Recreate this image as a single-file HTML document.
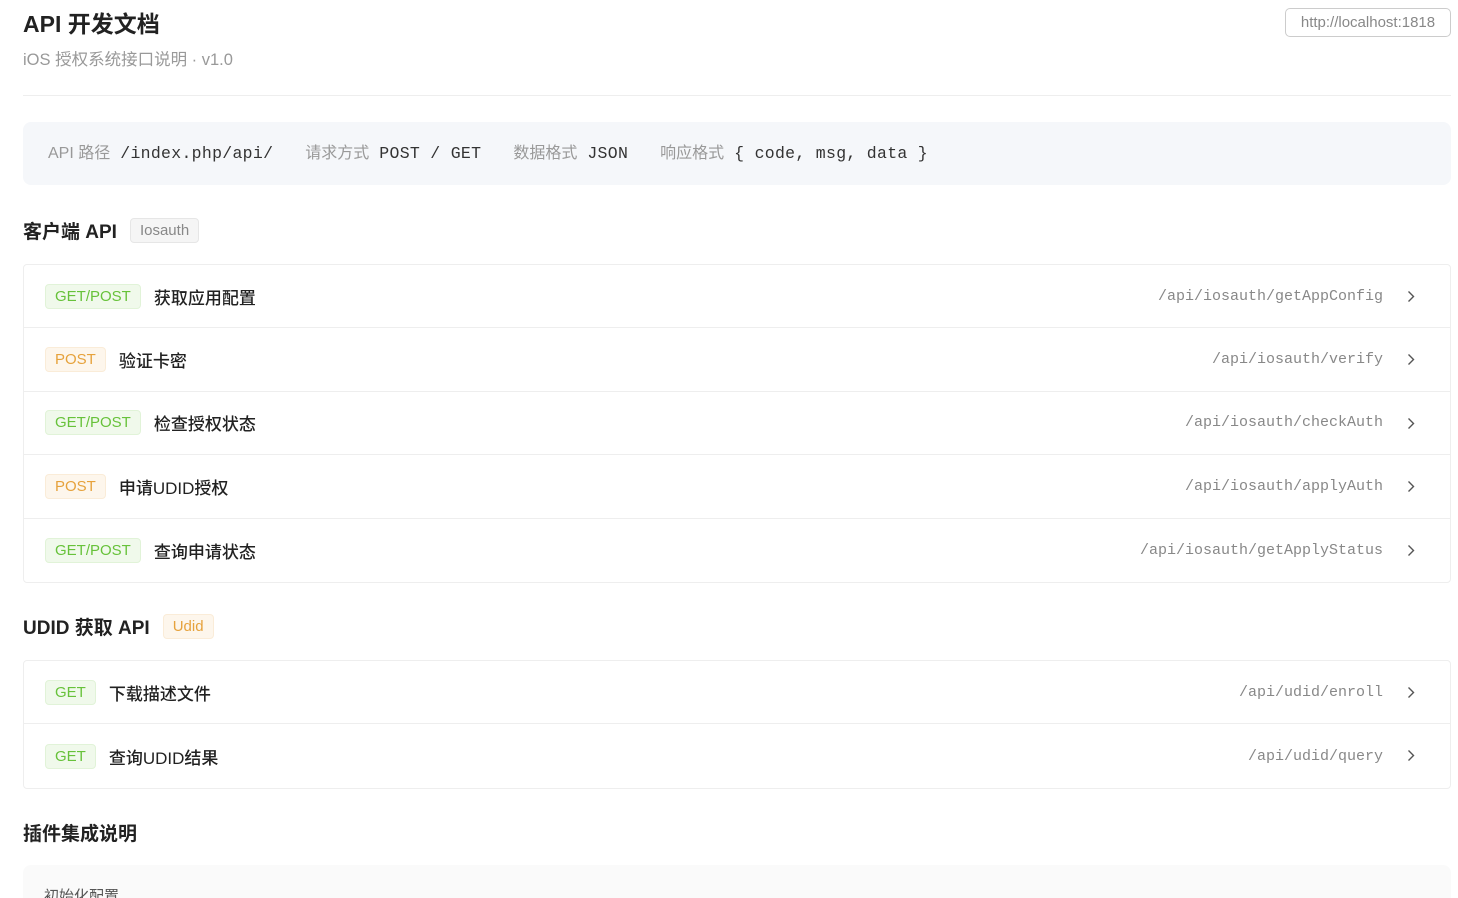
<!DOCTYPE html>
<html><head><meta charset="utf-8"><style>
*{margin:0;padding:0;box-sizing:border-box}
html,body{width:1458px;height:898px;overflow:hidden}
body{background:#fff;font-family:"Liberation Sans","Noto Sans CJK SC",sans-serif;color:#222;position:relative}
.a{position:absolute}
.mono{font-family:"Liberation Mono","DejaVu Sans Mono",monospace}
.h1{left:23px;top:5px;font-size:23px;font-weight:bold;color:#222}
.sub{left:23px;top:46px;font-size:16.5px;color:#999}
.url{left:1285px;top:8px;width:166px;height:29px;border:1px solid #ccc;border-radius:5px;font-size:15px;color:#888;text-align:center;line-height:27px}
.hr{left:23px;top:95px;width:1428px;height:1px;background:#eee}
.info{left:23px;top:122px;width:1428px;height:63px;background:#f5f7fa;border-radius:8px;font-size:16px;line-height:63px;padding-left:25px;color:#999;white-space:nowrap}
.info .mono{color:#333;font-size:16.5px;letter-spacing:0.3px;margin-left:10px}
.info .g{margin-right:32px}
.sec{left:23px;font-size:19px;font-weight:bold;color:#222;display:flex;align-items:center}
.tag{margin-left:13px;font-size:15px;font-weight:normal;padding:0 9px;height:25px;line-height:24px;border-radius:4px;border:1px solid #e6e6e6;background:#f5f5f5;color:#888}
.tag.o{background:#fdf6ec;border-color:#faecd8;color:#e6a23c}
.list{left:23px;width:1428px;border:1px solid #eee;border-radius:4px}
.row{height:63.4px;border-bottom:1px solid #eee;display:flex;align-items:center;padding-left:21px;position:relative}
.row:last-child{border-bottom:none}
.b{font-size:15px;height:25px;line-height:23px;padding:0 9px;border-radius:4px;border:1px solid;margin-right:13px}
.gn{background:#f0f9eb;border-color:#e1f3d8;color:#67c23a}
.or{background:#fdf6ec;border-color:#faecd8;color:#e6a23c}
.t{font-size:17px;color:#222;font-weight:500}
.p{position:absolute;right:67px;font-size:15px;color:#888}
.chev{position:absolute;right:35px;top:25px}
.box{left:23px;top:865px;width:1428px;height:60px;background:#fafafa;border-radius:8px;padding:20px 21px;font-size:15px;color:#555}
</style></head><body>
<div class="a h1">API 开发文档</div>
<div class="a sub">iOS 授权系统接口说明 · v1.0</div>
<div class="a url">http://localhost:1818</div>
<div class="a hr"></div>
<div class="a info"><span class="g">API 路径<span class="mono">/index.php/api/</span></span><span class="g">请求方式<span class="mono">POST / GET</span></span><span class="g">数据格式<span class="mono">JSON</span></span><span>响应格式<span class="mono">{ code, msg, data }</span></span></div>

<div class="a sec" style="top:217px">客户端 API<span class="tag">Iosauth</span></div>
<div class="a list" style="top:264px">
<div class="row"><span class="b gn">GET/POST</span><span class="t">获取应用配置</span><span class="p mono">/api/iosauth/getAppConfig</span><svg class="chev" width="8" height="13" viewBox="0 0 8 13"><path d="M1.5 1.5L6.5 6.5L1.5 11.5" fill="none" stroke="#555" stroke-width="1.4"/></svg></div>
<div class="row"><span class="b or">POST</span><span class="t">验证卡密</span><span class="p mono">/api/iosauth/verify</span><svg class="chev" width="8" height="13" viewBox="0 0 8 13"><path d="M1.5 1.5L6.5 6.5L1.5 11.5" fill="none" stroke="#555" stroke-width="1.4"/></svg></div>
<div class="row"><span class="b gn">GET/POST</span><span class="t">检查授权状态</span><span class="p mono">/api/iosauth/checkAuth</span><svg class="chev" width="8" height="13" viewBox="0 0 8 13"><path d="M1.5 1.5L6.5 6.5L1.5 11.5" fill="none" stroke="#555" stroke-width="1.4"/></svg></div>
<div class="row"><span class="b or">POST</span><span class="t">申请UDID授权</span><span class="p mono">/api/iosauth/applyAuth</span><svg class="chev" width="8" height="13" viewBox="0 0 8 13"><path d="M1.5 1.5L6.5 6.5L1.5 11.5" fill="none" stroke="#555" stroke-width="1.4"/></svg></div>
<div class="row"><span class="b gn">GET/POST</span><span class="t">查询申请状态</span><span class="p mono">/api/iosauth/getApplyStatus</span><svg class="chev" width="8" height="13" viewBox="0 0 8 13"><path d="M1.5 1.5L6.5 6.5L1.5 11.5" fill="none" stroke="#555" stroke-width="1.4"/></svg></div>
</div>

<div class="a sec" style="top:613px">UDID 获取 API<span class="tag o">Udid</span></div>
<div class="a list" style="top:660px">
<div class="row"><span class="b gn">GET</span><span class="t">下载描述文件</span><span class="p mono">/api/udid/enroll</span><svg class="chev" width="8" height="13" viewBox="0 0 8 13"><path d="M1.5 1.5L6.5 6.5L1.5 11.5" fill="none" stroke="#555" stroke-width="1.4"/></svg></div>
<div class="row"><span class="b gn">GET</span><span class="t">查询UDID结果</span><span class="p mono">/api/udid/query</span><svg class="chev" width="8" height="13" viewBox="0 0 8 13"><path d="M1.5 1.5L6.5 6.5L1.5 11.5" fill="none" stroke="#555" stroke-width="1.4"/></svg></div>
</div>

<div class="a sec" style="top:819px">插件集成说明</div>
<div class="a box">初始化配置</div>
</body></html>
